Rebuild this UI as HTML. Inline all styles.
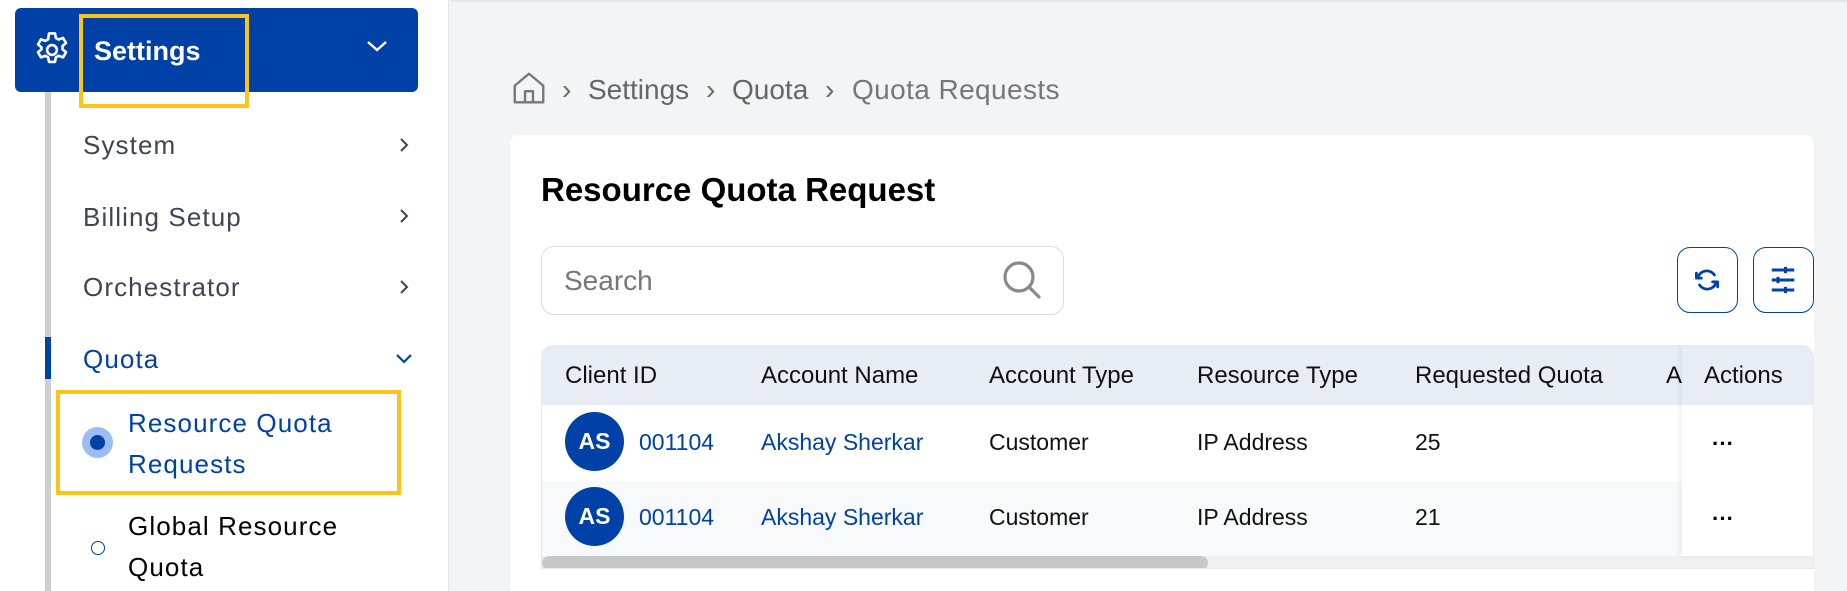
<!DOCTYPE html>
<html><head><meta charset="utf-8"><style>
*{box-sizing:border-box;margin:0;padding:0}
html{overflow:hidden;width:1847px;height:591px}
body{width:1847px;height:591px;overflow:hidden;background:#f3f4f6;font-family:"Liberation Sans",sans-serif;position:relative}
.abs{position:absolute}
#side{left:0;top:0;width:449px;height:591px;background:#fff;border-right:1px solid #e5e7eb}
.hdr{left:15px;top:8px;width:403px;height:84px;background:#0041a8;border-radius:6px}
.yb{border:4px solid #fcc419}
.mi{left:83px;font-size:26px;color:#3f4553;letter-spacing:1.1px}
.t{font-size:23px;color:#111;white-space:nowrap}
.b{font-size:23px;color:#111;white-space:nowrap}
.lnk{color:#0041a8}
.av{width:59px;height:59px;border-radius:50%;background:#0041a8;color:#fff;font-weight:bold;font-size:23px;display:flex;align-items:center;justify-content:center}
.bc{font-size:28px;color:#666;white-space:nowrap;top:74px}
</style></head><body>
<div id="side" class="abs"></div>
<div class="abs hdr"></div>
<svg class="abs" style="left:31px;top:29px" width="42" height="42" viewBox="0 0 24 24" fill="none" stroke="#fff" stroke-width="1.5" stroke-linejoin="round"><path d="M10.3 2.5h3.4l.5 2.6 1.6.9 2.5-.9 1.7 2.9-2 1.7v1.9l2 1.7-1.7 2.9-2.5-.9-1.6.9-.5 2.6h-3.4l-.5-2.6-1.6-.9-2.5.9-1.7-2.9 2-1.7V10.5l-2-1.7 1.7-2.9 2.5.9 1.6-.9z"/><circle cx="12" cy="12" r="2.8"/></svg>
<div class="abs" style="left:94px;top:36px;font-size:27px;font-weight:bold;color:#fff">Settings</div>
<div class="abs yb" style="left:79px;top:14px;width:170px;height:94px"></div>
<svg class="abs" style="left:365px;top:38px" width="24" height="16" viewBox="0 0 24 16" fill="none" stroke="#fff" stroke-width="2.4"><path d="M3 4l9 8 9-8"/></svg>
<div class="abs" style="left:45px;top:92px;width:6px;height:499px;background:#cfcfcf"></div>
<div class="abs" style="left:45px;top:337px;width:6px;height:42px;background:#0041a8"></div>
<div class="abs mi" style="top:130px">System</div>
<div class="abs mi" style="top:202px">Billing Setup</div>
<div class="abs mi" style="top:272px">Orchestrator</div>
<div class="abs mi" style="top:344px;color:#0041a8">Quota</div>
<svg class="abs" style="left:397px;top:136px" width="14" height="18" viewBox="0 0 14 18" fill="none" stroke="#3f4553" stroke-width="2"><path d="M4 3l6 6-6 6"/></svg>
<svg class="abs" style="left:397px;top:207px" width="14" height="18" viewBox="0 0 14 18" fill="none" stroke="#3f4553" stroke-width="2"><path d="M4 3l6 6-6 6"/></svg>
<svg class="abs" style="left:397px;top:278px" width="14" height="18" viewBox="0 0 14 18" fill="none" stroke="#3f4553" stroke-width="2"><path d="M4 3l6 6-6 6"/></svg>
<svg class="abs" style="left:394px;top:352px" width="20" height="14" viewBox="0 0 20 14" fill="none" stroke="#0041a8" stroke-width="2.2"><path d="M3 3l7 7 7-7"/></svg>
<div class="abs yb" style="left:56px;top:390px;width:345px;height:105px"></div>
<div class="abs" style="left:82px;top:427px;width:31px;height:31px;border-radius:50%;background:#9bbcf5"></div>
<div class="abs" style="left:90px;top:435px;width:15px;height:15px;border-radius:50%;background:#0041a8"></div>
<div class="abs" style="left:128px;top:403px;font-size:26px;line-height:41px;color:#0041a8;letter-spacing:1.1px">Resource Quota<br>Requests</div>
<div class="abs" style="left:91px;top:541px;width:14px;height:14px;border-radius:50%;border:1.5px solid #0041a8"></div>
<div class="abs" style="left:128px;top:506px;font-size:26px;line-height:41px;color:#000;letter-spacing:1.1px">Global Resource<br>Quota</div>

<div class="abs" style="left:450px;top:0;width:1397px;height:2px;background:#e5e7eb"></div>
<svg class="abs" style="left:510px;top:69px" width="38" height="38" viewBox="0 0 24 24" fill="none" stroke="#777" stroke-width="1.5" stroke-linejoin="round"><path d="M3 10.5L12 3l9 7.5V21H3z"/><path d="M9.5 21v-7h5v7"/></svg>
<div class="abs bc" style="left:562px">›</div>
<div class="abs bc" style="left:588px">Settings</div>
<div class="abs bc" style="left:706px">›</div>
<div class="abs bc" style="left:732px">Quota</div>
<div class="abs bc" style="left:825px">›</div>
<div class="abs bc" style="left:852px;color:#777;letter-spacing:.4px">Quota Requests</div>
<div class="abs" style="left:510px;top:135px;width:1304px;height:456px;background:#fff;border-radius:8px 8px 0 0"></div>
<div class="abs" style="left:541px;top:171px;font-size:33px;font-weight:bold;color:#000">Resource Quota Request</div>
<div class="abs" style="left:541px;top:246px;width:523px;height:69px;border:1px solid #ddd;border-radius:13px"></div>
<div class="abs" style="left:564px;top:265px;font-size:28px;color:#777">Search</div>
<svg class="abs" style="left:998px;top:256px" width="48" height="48" viewBox="0 0 24 24" fill="none" stroke="#888" stroke-width="1.6" stroke-linecap="round"><circle cx="10.5" cy="10.5" r="7"/><path d="M15.5 15.5l5 5"/></svg>
<div class="abs" style="left:1677px;top:247px;width:61px;height:66px;border:1.5px solid #0041a8;border-radius:13px"></div>
<div class="abs" style="left:1753px;top:247px;width:61px;height:66px;border:1.5px solid #0041a8;border-radius:13px"></div>
<svg class="abs" style="left:1692px;top:265px" width="30" height="30" viewBox="0 0 24 24" fill="none" stroke="#0041a8" stroke-width="2.2" stroke-linecap="round" stroke-linejoin="round"><path d="M4.5 10.5A7.5 7.5 0 0 1 18 8"/><path d="M19.5 13.5A7.5 7.5 0 0 1 6 16"/><path d="M3.5 6.5v4h4"/><path d="M20.5 17.5v-4h-4"/></svg>
<svg class="abs" style="left:1768px;top:265px" width="30" height="30" viewBox="0 0 24 24" fill="none" stroke="#0041a8" stroke-width="2.4"><path d="M3 4h18M3 12h18M3 20h18"/><path d="M14 1.5v5M8 9.5v5M14 17.5v5" /></svg>

<div class="abs" style="left:541px;top:345px;width:1273px;height:224px;border:1px solid #e8e8e8;border-radius:12px 12px 0 0;overflow:hidden;background:#fff">
 <div class="abs" style="left:0;top:0;width:1273px;height:59px;background:#e8edf5"></div>
 <div class="abs" style="left:0;top:135px;width:1273px;height:75px;background:#f8f9fb"></div>
 <div class="abs" style="left:0;top:210px;width:1273px;height:14px;background:#f0f0f0"></div>
 <div class="abs" style="left:0;top:210px;width:666px;height:14px;background:#c8c8c8;border-radius:7px"></div>
 <div class="abs t" style="left:23px;top:16px;font-size:24px">Client ID</div>
 <div class="abs t" style="left:219px;top:16px;font-size:24px">Account Name</div>
 <div class="abs t" style="left:447px;top:16px;font-size:24px">Account Type</div>
 <div class="abs t" style="left:655px;top:16px;font-size:24px">Resource Type</div>
 <div class="abs t" style="left:873px;top:16px;font-size:24px">Requested Quota</div>
 <div class="abs t" style="left:1124px;top:16px;font-size:24px">A</div>
 <div class="abs av" style="left:23px;top:66px">AS</div>
 <div class="abs b lnk" style="left:97px;top:83px">001104</div>
 <div class="abs b lnk" style="left:219px;top:83px">Akshay Sherkar</div>
 <div class="abs b" style="left:447px;top:83px">Customer</div>
 <div class="abs b" style="left:655px;top:83px">IP Address</div>
 <div class="abs b" style="left:873px;top:83px">25</div>
 <div class="abs av" style="left:23px;top:141px">AS</div>
 <div class="abs b lnk" style="left:97px;top:158px">001104</div>
 <div class="abs b lnk" style="left:219px;top:158px">Akshay Sherkar</div>
 <div class="abs b" style="left:447px;top:158px">Customer</div>
 <div class="abs b" style="left:655px;top:158px">IP Address</div>
 <div class="abs b" style="left:873px;top:158px">21</div>
 <div class="abs" style="left:1140px;top:0;width:133px;height:210px;background:#fff;box-shadow:-3px 0 5px rgba(0,0,0,.05)">
  <div class="abs" style="left:0;top:0;width:133px;height:59px;background:#e8edf5"></div>
  <div class="abs t" style="left:22px;top:16px;font-size:24px">Actions</div>
  <div class="abs" style="left:30px;top:85px;font-size:22px;font-weight:bold">···</div>
  <div class="abs" style="left:30px;top:160px;font-size:22px;font-weight:bold">···</div>
 </div>
</div>
</body></html>
